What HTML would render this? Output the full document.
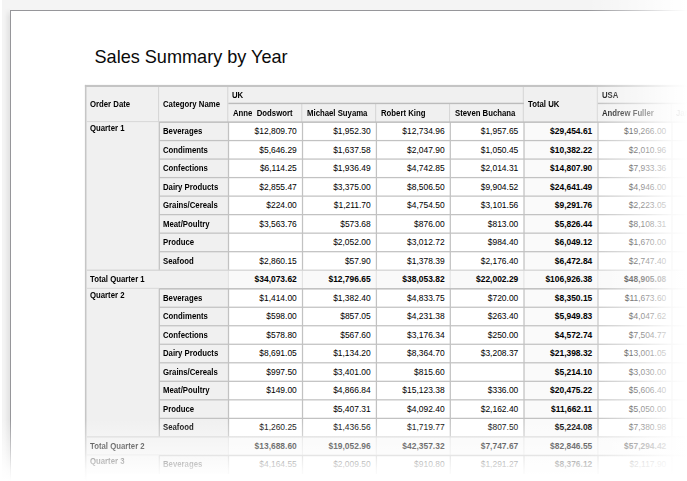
<!DOCTYPE html>
<html><head><meta charset="utf-8"><title>Sales Summary by Year</title>
<style>
html,body{margin:0;padding:0}
body{width:687px;height:481px;overflow:hidden;position:relative;background:#fff;font-family:"Liberation Sans",sans-serif}
#bg{position:absolute;left:2px;top:0;width:700px;height:500px;background:#f4f4f4}
#sh{position:absolute;left:4px;top:8px;width:6px;height:500px;background:linear-gradient(to right,rgba(0,0,0,0),rgba(0,0,0,0.07));-webkit-mask-image:linear-gradient(to bottom,transparent 0,#000 9px);mask-image:linear-gradient(to bottom,transparent 0,#000 9px)}
#page{position:absolute;left:10px;top:10px;width:800px;height:600px;background:#fff;border:1px solid #96969a;box-sizing:border-box}
#title{position:absolute;left:94.5px;top:44.5px;font-size:18.1px;line-height:24px;color:#0a0a0a;white-space:nowrap}
#grid{position:absolute;left:0;top:0}
.t{position:absolute;box-sizing:border-box;font-size:8.9px;color:#000;white-space:nowrap;overflow:hidden}
.t span{display:inline-block;position:relative}
.t.l{padding-left:3.8px;text-align:left}
.t.r{padding-right:5.6px;text-align:right;font-size:8.45px}
.h span{transform:scaleX(0.875);transform-origin:0 50%;top:0.0px}
.cat span{top:0.0px}
.q span{top:-3.0px}
.r span{top:0.0px}
.h,.b{font-weight:bold}
.n{font-weight:normal;color:#000}
#fr{position:absolute;right:0;top:0;width:100px;height:481px;background:linear-gradient(to right,rgba(255,255,255,0),rgba(255,255,255,0.5) 50%,rgba(255,255,255,0.86) 82%,rgba(255,255,255,1) 100%)}
#fb{position:absolute;left:0;bottom:0;width:687px;height:62px;background:linear-gradient(to bottom,rgba(255,255,255,0),rgba(255,255,255,0.5) 50%,rgba(255,255,255,0.88) 82%,rgba(255,255,255,1) 100%)}
</style></head><body>
<div id="bg"></div><div id="sh"></div>
<div id="page"></div>
<div id="title">Sales Summary by Year</div>
<svg id="grid" width="687" height="481" viewBox="0 0 687 481">
<rect x="85.60" y="85.00" width="674.40" height="37.04" fill="#f0f0f0"/>
<rect x="85.60" y="122.04" width="142.80" height="148.16" fill="#f0f0f0"/>
<rect x="228.40" y="122.04" width="531.60" height="148.16" fill="#fff"/>
<rect x="523.90" y="122.04" width="74.00" height="148.16" fill="#fafafa"/>
<rect x="85.60" y="270.20" width="142.80" height="18.52" fill="#f0f0f0"/>
<rect x="228.40" y="270.20" width="531.60" height="18.52" fill="#f9f9f9"/>
<rect x="85.60" y="288.72" width="142.80" height="148.16" fill="#f0f0f0"/>
<rect x="228.40" y="288.72" width="531.60" height="148.16" fill="#fff"/>
<rect x="523.90" y="288.72" width="74.00" height="148.16" fill="#fafafa"/>
<rect x="85.60" y="436.88" width="142.80" height="18.52" fill="#f0f0f0"/>
<rect x="228.40" y="436.88" width="531.60" height="18.52" fill="#f9f9f9"/>
<rect x="85.60" y="455.40" width="142.80" height="18.52" fill="#f0f0f0"/>
<rect x="228.40" y="455.40" width="531.60" height="18.52" fill="#fff"/>
<rect x="523.90" y="455.40" width="74.00" height="18.52" fill="#fafafa"/>
<rect x="158.12" y="85.00" width="0.95" height="37.04" fill="#d3d3d3"/>
<rect x="227.33" y="85.00" width="0.95" height="37.04" fill="#d3d3d3"/>
<rect x="522.82" y="85.00" width="0.95" height="37.04" fill="#d3d3d3"/>
<rect x="596.82" y="85.00" width="0.95" height="37.04" fill="#d3d3d3"/>
<rect x="301.32" y="103.52" width="0.95" height="18.52" fill="#d3d3d3"/>
<rect x="375.22" y="103.52" width="0.95" height="18.52" fill="#d3d3d3"/>
<rect x="449.12" y="103.52" width="0.95" height="18.52" fill="#d3d3d3"/>
<rect x="670.82" y="103.52" width="0.95" height="18.52" fill="#d3d3d3"/>
<rect x="744.72" y="103.52" width="0.95" height="18.52" fill="#d3d3d3"/>
<rect x="228.40" y="102.72" width="295.50" height="1.40" fill="#bcbcbc"/>
<rect x="597.90" y="102.72" width="162.10" height="1.40" fill="#bcbcbc"/>
<rect x="159.20" y="139.94" width="600.80" height="1.25" fill="#c2c2c2"/>
<rect x="159.20" y="158.45" width="600.80" height="1.25" fill="#c2c2c2"/>
<rect x="159.20" y="176.97" width="600.80" height="1.25" fill="#c2c2c2"/>
<rect x="159.20" y="195.50" width="600.80" height="1.25" fill="#c2c2c2"/>
<rect x="159.20" y="214.01" width="600.80" height="1.25" fill="#c2c2c2"/>
<rect x="159.20" y="232.53" width="600.80" height="1.25" fill="#c2c2c2"/>
<rect x="159.20" y="251.06" width="600.80" height="1.25" fill="#c2c2c2"/>
<rect x="158.67" y="122.04" width="1.25" height="148.16" fill="#c2c2c2"/>
<rect x="227.88" y="122.04" width="1.25" height="148.16" fill="#c2c2c2"/>
<rect x="301.88" y="122.04" width="1.25" height="148.16" fill="#c2c2c2"/>
<rect x="375.78" y="122.04" width="1.25" height="148.16" fill="#c2c2c2"/>
<rect x="449.68" y="122.04" width="1.25" height="148.16" fill="#c2c2c2"/>
<rect x="523.38" y="122.04" width="1.25" height="148.16" fill="#c2c2c2"/>
<rect x="597.38" y="122.04" width="1.25" height="148.16" fill="#c2c2c2"/>
<rect x="671.38" y="122.04" width="1.25" height="148.16" fill="#c2c2c2"/>
<rect x="745.27" y="122.04" width="1.25" height="148.16" fill="#c2c2c2"/>
<rect x="85.60" y="121.16" width="73.60" height="0.95" fill="#d6d6d6"/>
<rect x="159.20" y="121.39" width="600.80" height="1.50" fill="#bebebe"/>
<rect x="227.85" y="270.20" width="1.10" height="18.52" fill="#e2e2e2"/>
<rect x="301.85" y="270.20" width="1.10" height="18.52" fill="#e2e2e2"/>
<rect x="375.75" y="270.20" width="1.10" height="18.52" fill="#e2e2e2"/>
<rect x="449.65" y="270.20" width="1.10" height="18.52" fill="#e2e2e2"/>
<rect x="523.35" y="270.20" width="1.10" height="18.52" fill="#e2e2e2"/>
<rect x="597.35" y="270.20" width="1.10" height="18.52" fill="#e2e2e2"/>
<rect x="671.35" y="270.20" width="1.10" height="18.52" fill="#e2e2e2"/>
<rect x="745.25" y="270.20" width="1.10" height="18.52" fill="#e2e2e2"/>
<rect x="85.60" y="269.55" width="674.40" height="1.30" fill="#d4d4d4"/>
<rect x="159.20" y="306.62" width="600.80" height="1.25" fill="#c2c2c2"/>
<rect x="159.20" y="325.13" width="600.80" height="1.25" fill="#c2c2c2"/>
<rect x="159.20" y="343.65" width="600.80" height="1.25" fill="#c2c2c2"/>
<rect x="159.20" y="362.18" width="600.80" height="1.25" fill="#c2c2c2"/>
<rect x="159.20" y="380.69" width="600.80" height="1.25" fill="#c2c2c2"/>
<rect x="159.20" y="399.21" width="600.80" height="1.25" fill="#c2c2c2"/>
<rect x="159.20" y="417.74" width="600.80" height="1.25" fill="#c2c2c2"/>
<rect x="158.67" y="288.72" width="1.25" height="148.16" fill="#c2c2c2"/>
<rect x="227.88" y="288.72" width="1.25" height="148.16" fill="#c2c2c2"/>
<rect x="301.88" y="288.72" width="1.25" height="148.16" fill="#c2c2c2"/>
<rect x="375.78" y="288.72" width="1.25" height="148.16" fill="#c2c2c2"/>
<rect x="449.68" y="288.72" width="1.25" height="148.16" fill="#c2c2c2"/>
<rect x="523.38" y="288.72" width="1.25" height="148.16" fill="#c2c2c2"/>
<rect x="597.38" y="288.72" width="1.25" height="148.16" fill="#c2c2c2"/>
<rect x="671.38" y="288.72" width="1.25" height="148.16" fill="#c2c2c2"/>
<rect x="745.27" y="288.72" width="1.25" height="148.16" fill="#c2c2c2"/>
<rect x="85.60" y="287.85" width="73.60" height="0.95" fill="#d6d6d6"/>
<rect x="159.20" y="288.07" width="600.80" height="1.50" fill="#bebebe"/>
<rect x="227.85" y="436.88" width="1.10" height="18.52" fill="#e2e2e2"/>
<rect x="301.85" y="436.88" width="1.10" height="18.52" fill="#e2e2e2"/>
<rect x="375.75" y="436.88" width="1.10" height="18.52" fill="#e2e2e2"/>
<rect x="449.65" y="436.88" width="1.10" height="18.52" fill="#e2e2e2"/>
<rect x="523.35" y="436.88" width="1.10" height="18.52" fill="#e2e2e2"/>
<rect x="597.35" y="436.88" width="1.10" height="18.52" fill="#e2e2e2"/>
<rect x="671.35" y="436.88" width="1.10" height="18.52" fill="#e2e2e2"/>
<rect x="745.25" y="436.88" width="1.10" height="18.52" fill="#e2e2e2"/>
<rect x="85.60" y="436.23" width="674.40" height="1.30" fill="#d4d4d4"/>
<rect x="158.67" y="455.40" width="1.25" height="18.52" fill="#c2c2c2"/>
<rect x="227.88" y="455.40" width="1.25" height="18.52" fill="#c2c2c2"/>
<rect x="301.88" y="455.40" width="1.25" height="18.52" fill="#c2c2c2"/>
<rect x="375.78" y="455.40" width="1.25" height="18.52" fill="#c2c2c2"/>
<rect x="449.68" y="455.40" width="1.25" height="18.52" fill="#c2c2c2"/>
<rect x="523.38" y="455.40" width="1.25" height="18.52" fill="#c2c2c2"/>
<rect x="597.38" y="455.40" width="1.25" height="18.52" fill="#c2c2c2"/>
<rect x="671.38" y="455.40" width="1.25" height="18.52" fill="#c2c2c2"/>
<rect x="745.27" y="455.40" width="1.25" height="18.52" fill="#c2c2c2"/>
<rect x="85.60" y="454.52" width="73.60" height="0.95" fill="#d6d6d6"/>
<rect x="159.20" y="454.75" width="600.80" height="1.50" fill="#bebebe"/>
<rect x="84.90" y="84.90" width="675.10" height="2.10" fill="#c4c4c4"/>
<rect x="84.90" y="84.90" width="1.05" height="435.10" fill="#c4c4c4"/>
<rect x="85.95" y="87.00" width="1.00" height="433.00" fill="#dbdbdb"/>
</svg>
<div class="t h l" style="left:86.70px;top:85.90px;width:73.60px;height:37.04px;line-height:37.04px"><span>Order Date</span></div>
<div class="t h l" style="left:159.40px;top:85.90px;width:69.20px;height:37.04px;line-height:37.04px"><span>Category Name</span></div>
<div class="t h l" style="left:228.40px;top:85.90px;width:295.50px;height:18.52px;line-height:18.52px"><span>UK</span></div>
<div class="t h l" style="left:229.00px;top:104.02px;width:74.00px;height:18.52px;line-height:18.52px"><span>Anne&nbsp; Dodswort</span></div>
<div class="t h l" style="left:303.00px;top:104.02px;width:73.90px;height:18.52px;line-height:18.52px"><span>Michael Suyama</span></div>
<div class="t h l" style="left:376.90px;top:104.02px;width:73.90px;height:18.52px;line-height:18.52px"><span>Robert King</span></div>
<div class="t h l" style="left:450.80px;top:104.02px;width:73.70px;height:18.52px;line-height:18.52px"><span>Steven Buchana</span></div>
<div class="t h l" style="left:523.90px;top:85.90px;width:74.00px;height:37.04px;line-height:37.04px"><span>Total UK</span></div>
<div class="t h l" style="left:597.90px;top:85.90px;width:147.90px;height:18.52px;line-height:18.52px"><span>USA</span></div>
<div class="t h l" style="left:598.50px;top:104.02px;width:74.00px;height:18.52px;line-height:18.52px"><span>Andrew Fuller</span></div>
<div class="t h l" style="left:672.50px;top:104.02px;width:73.90px;height:18.52px;line-height:18.52px"><span>Janet Leverling</span></div>
<div class="t h l q" style="left:86.50px;top:122.04px;width:73.60px;height:18.52px;line-height:18.52px"><span>Quarter 1</span></div>
<div class="t h l cat" style="left:159.20px;top:122.04px;width:69.20px;height:18.52px;line-height:18.52px"><span>Beverages</span></div>
<div class="t r n" style="left:228.40px;top:122.04px;width:74.00px;height:18.52px;line-height:18.52px"><span>$12,809.70</span></div>
<div class="t r n" style="left:302.40px;top:122.04px;width:73.90px;height:18.52px;line-height:18.52px"><span>$1,952.30</span></div>
<div class="t r n" style="left:376.30px;top:122.04px;width:73.90px;height:18.52px;line-height:18.52px"><span>$12,734.96</span></div>
<div class="t r n" style="left:450.20px;top:122.04px;width:73.70px;height:18.52px;line-height:18.52px"><span>$1,957.65</span></div>
<div class="t r b" style="left:523.90px;top:122.04px;width:74.00px;height:18.52px;line-height:18.52px"><span>$29,454.61</span></div>
<div class="t r n" style="left:597.90px;top:122.04px;width:74.00px;height:18.52px;line-height:18.52px"><span>$19,266.00</span></div>
<div class="t h l cat" style="left:159.20px;top:140.56px;width:69.20px;height:18.52px;line-height:18.52px"><span>Condiments</span></div>
<div class="t r n" style="left:228.40px;top:140.56px;width:74.00px;height:18.52px;line-height:18.52px"><span>$5,646.29</span></div>
<div class="t r n" style="left:302.40px;top:140.56px;width:73.90px;height:18.52px;line-height:18.52px"><span>$1,637.58</span></div>
<div class="t r n" style="left:376.30px;top:140.56px;width:73.90px;height:18.52px;line-height:18.52px"><span>$2,047.90</span></div>
<div class="t r n" style="left:450.20px;top:140.56px;width:73.70px;height:18.52px;line-height:18.52px"><span>$1,050.45</span></div>
<div class="t r b" style="left:523.90px;top:140.56px;width:74.00px;height:18.52px;line-height:18.52px"><span>$10,382.22</span></div>
<div class="t r n" style="left:597.90px;top:140.56px;width:74.00px;height:18.52px;line-height:18.52px"><span>$2,010.96</span></div>
<div class="t h l cat" style="left:159.20px;top:159.08px;width:69.20px;height:18.52px;line-height:18.52px"><span>Confections</span></div>
<div class="t r n" style="left:228.40px;top:159.08px;width:74.00px;height:18.52px;line-height:18.52px"><span>$6,114.25</span></div>
<div class="t r n" style="left:302.40px;top:159.08px;width:73.90px;height:18.52px;line-height:18.52px"><span>$1,936.49</span></div>
<div class="t r n" style="left:376.30px;top:159.08px;width:73.90px;height:18.52px;line-height:18.52px"><span>$4,742.85</span></div>
<div class="t r n" style="left:450.20px;top:159.08px;width:73.70px;height:18.52px;line-height:18.52px"><span>$2,014.31</span></div>
<div class="t r b" style="left:523.90px;top:159.08px;width:74.00px;height:18.52px;line-height:18.52px"><span>$14,807.90</span></div>
<div class="t r n" style="left:597.90px;top:159.08px;width:74.00px;height:18.52px;line-height:18.52px"><span>$7,933.36</span></div>
<div class="t h l cat" style="left:159.20px;top:177.60px;width:69.20px;height:18.52px;line-height:18.52px"><span>Dairy Products</span></div>
<div class="t r n" style="left:228.40px;top:177.60px;width:74.00px;height:18.52px;line-height:18.52px"><span>$2,855.47</span></div>
<div class="t r n" style="left:302.40px;top:177.60px;width:73.90px;height:18.52px;line-height:18.52px"><span>$3,375.00</span></div>
<div class="t r n" style="left:376.30px;top:177.60px;width:73.90px;height:18.52px;line-height:18.52px"><span>$8,506.50</span></div>
<div class="t r n" style="left:450.20px;top:177.60px;width:73.70px;height:18.52px;line-height:18.52px"><span>$9,904.52</span></div>
<div class="t r b" style="left:523.90px;top:177.60px;width:74.00px;height:18.52px;line-height:18.52px"><span>$24,641.49</span></div>
<div class="t r n" style="left:597.90px;top:177.60px;width:74.00px;height:18.52px;line-height:18.52px"><span>$4,946.00</span></div>
<div class="t h l cat" style="left:159.20px;top:196.12px;width:69.20px;height:18.52px;line-height:18.52px"><span>Grains/Cereals</span></div>
<div class="t r n" style="left:228.40px;top:196.12px;width:74.00px;height:18.52px;line-height:18.52px"><span>$224.00</span></div>
<div class="t r n" style="left:302.40px;top:196.12px;width:73.90px;height:18.52px;line-height:18.52px"><span>$1,211.70</span></div>
<div class="t r n" style="left:376.30px;top:196.12px;width:73.90px;height:18.52px;line-height:18.52px"><span>$4,754.50</span></div>
<div class="t r n" style="left:450.20px;top:196.12px;width:73.70px;height:18.52px;line-height:18.52px"><span>$3,101.56</span></div>
<div class="t r b" style="left:523.90px;top:196.12px;width:74.00px;height:18.52px;line-height:18.52px"><span>$9,291.76</span></div>
<div class="t r n" style="left:597.90px;top:196.12px;width:74.00px;height:18.52px;line-height:18.52px"><span>$2,223.05</span></div>
<div class="t h l cat" style="left:159.20px;top:214.64px;width:69.20px;height:18.52px;line-height:18.52px"><span>Meat/Poultry</span></div>
<div class="t r n" style="left:228.40px;top:214.64px;width:74.00px;height:18.52px;line-height:18.52px"><span>$3,563.76</span></div>
<div class="t r n" style="left:302.40px;top:214.64px;width:73.90px;height:18.52px;line-height:18.52px"><span>$573.68</span></div>
<div class="t r n" style="left:376.30px;top:214.64px;width:73.90px;height:18.52px;line-height:18.52px"><span>$876.00</span></div>
<div class="t r n" style="left:450.20px;top:214.64px;width:73.70px;height:18.52px;line-height:18.52px"><span>$813.00</span></div>
<div class="t r b" style="left:523.90px;top:214.64px;width:74.00px;height:18.52px;line-height:18.52px"><span>$5,826.44</span></div>
<div class="t r n" style="left:597.90px;top:214.64px;width:74.00px;height:18.52px;line-height:18.52px"><span>$8,108.31</span></div>
<div class="t h l cat" style="left:159.20px;top:233.16px;width:69.20px;height:18.52px;line-height:18.52px"><span>Produce</span></div>
<div class="t r n" style="left:302.40px;top:233.16px;width:73.90px;height:18.52px;line-height:18.52px"><span>$2,052.00</span></div>
<div class="t r n" style="left:376.30px;top:233.16px;width:73.90px;height:18.52px;line-height:18.52px"><span>$3,012.72</span></div>
<div class="t r n" style="left:450.20px;top:233.16px;width:73.70px;height:18.52px;line-height:18.52px"><span>$984.40</span></div>
<div class="t r b" style="left:523.90px;top:233.16px;width:74.00px;height:18.52px;line-height:18.52px"><span>$6,049.12</span></div>
<div class="t r n" style="left:597.90px;top:233.16px;width:74.00px;height:18.52px;line-height:18.52px"><span>$1,670.00</span></div>
<div class="t h l cat" style="left:159.20px;top:251.68px;width:69.20px;height:18.52px;line-height:18.52px"><span>Seafood</span></div>
<div class="t r n" style="left:228.40px;top:251.68px;width:74.00px;height:18.52px;line-height:18.52px"><span>$2,860.15</span></div>
<div class="t r n" style="left:302.40px;top:251.68px;width:73.90px;height:18.52px;line-height:18.52px"><span>$57.90</span></div>
<div class="t r n" style="left:376.30px;top:251.68px;width:73.90px;height:18.52px;line-height:18.52px"><span>$1,378.39</span></div>
<div class="t r n" style="left:450.20px;top:251.68px;width:73.70px;height:18.52px;line-height:18.52px"><span>$2,176.40</span></div>
<div class="t r b" style="left:523.90px;top:251.68px;width:74.00px;height:18.52px;line-height:18.52px"><span>$6,472.84</span></div>
<div class="t r n" style="left:597.90px;top:251.68px;width:74.00px;height:18.52px;line-height:18.52px"><span>$2,747.40</span></div>
<div class="t h l" style="left:86.40px;top:270.20px;width:142.80px;height:18.52px;line-height:18.52px"><span>Total Quarter 1</span></div>
<div class="t r b" style="left:228.40px;top:270.20px;width:74.00px;height:18.52px;line-height:18.52px"><span>$34,073.62</span></div>
<div class="t r b" style="left:302.40px;top:270.20px;width:73.90px;height:18.52px;line-height:18.52px"><span>$12,796.65</span></div>
<div class="t r b" style="left:376.30px;top:270.20px;width:73.90px;height:18.52px;line-height:18.52px"><span>$38,053.82</span></div>
<div class="t r b" style="left:450.20px;top:270.20px;width:73.70px;height:18.52px;line-height:18.52px"><span>$22,002.29</span></div>
<div class="t r b" style="left:523.90px;top:270.20px;width:74.00px;height:18.52px;line-height:18.52px"><span>$106,926.38</span></div>
<div class="t r b" style="left:597.90px;top:270.20px;width:74.00px;height:18.52px;line-height:18.52px"><span>$48,905.08</span></div>
<div class="t h l q" style="left:86.50px;top:288.72px;width:73.60px;height:18.52px;line-height:18.52px"><span>Quarter 2</span></div>
<div class="t h l cat" style="left:159.20px;top:288.72px;width:69.20px;height:18.52px;line-height:18.52px"><span>Beverages</span></div>
<div class="t r n" style="left:228.40px;top:288.72px;width:74.00px;height:18.52px;line-height:18.52px"><span>$1,414.00</span></div>
<div class="t r n" style="left:302.40px;top:288.72px;width:73.90px;height:18.52px;line-height:18.52px"><span>$1,382.40</span></div>
<div class="t r n" style="left:376.30px;top:288.72px;width:73.90px;height:18.52px;line-height:18.52px"><span>$4,833.75</span></div>
<div class="t r n" style="left:450.20px;top:288.72px;width:73.70px;height:18.52px;line-height:18.52px"><span>$720.00</span></div>
<div class="t r b" style="left:523.90px;top:288.72px;width:74.00px;height:18.52px;line-height:18.52px"><span>$8,350.15</span></div>
<div class="t r n" style="left:597.90px;top:288.72px;width:74.00px;height:18.52px;line-height:18.52px"><span>$11,673.60</span></div>
<div class="t h l cat" style="left:159.20px;top:307.24px;width:69.20px;height:18.52px;line-height:18.52px"><span>Condiments</span></div>
<div class="t r n" style="left:228.40px;top:307.24px;width:74.00px;height:18.52px;line-height:18.52px"><span>$598.00</span></div>
<div class="t r n" style="left:302.40px;top:307.24px;width:73.90px;height:18.52px;line-height:18.52px"><span>$857.05</span></div>
<div class="t r n" style="left:376.30px;top:307.24px;width:73.90px;height:18.52px;line-height:18.52px"><span>$4,231.38</span></div>
<div class="t r n" style="left:450.20px;top:307.24px;width:73.70px;height:18.52px;line-height:18.52px"><span>$263.40</span></div>
<div class="t r b" style="left:523.90px;top:307.24px;width:74.00px;height:18.52px;line-height:18.52px"><span>$5,949.83</span></div>
<div class="t r n" style="left:597.90px;top:307.24px;width:74.00px;height:18.52px;line-height:18.52px"><span>$4,047.62</span></div>
<div class="t h l cat" style="left:159.20px;top:325.76px;width:69.20px;height:18.52px;line-height:18.52px"><span>Confections</span></div>
<div class="t r n" style="left:228.40px;top:325.76px;width:74.00px;height:18.52px;line-height:18.52px"><span>$578.80</span></div>
<div class="t r n" style="left:302.40px;top:325.76px;width:73.90px;height:18.52px;line-height:18.52px"><span>$567.60</span></div>
<div class="t r n" style="left:376.30px;top:325.76px;width:73.90px;height:18.52px;line-height:18.52px"><span>$3,176.34</span></div>
<div class="t r n" style="left:450.20px;top:325.76px;width:73.70px;height:18.52px;line-height:18.52px"><span>$250.00</span></div>
<div class="t r b" style="left:523.90px;top:325.76px;width:74.00px;height:18.52px;line-height:18.52px"><span>$4,572.74</span></div>
<div class="t r n" style="left:597.90px;top:325.76px;width:74.00px;height:18.52px;line-height:18.52px"><span>$7,504.77</span></div>
<div class="t h l cat" style="left:159.20px;top:344.28px;width:69.20px;height:18.52px;line-height:18.52px"><span>Dairy Products</span></div>
<div class="t r n" style="left:228.40px;top:344.28px;width:74.00px;height:18.52px;line-height:18.52px"><span>$8,691.05</span></div>
<div class="t r n" style="left:302.40px;top:344.28px;width:73.90px;height:18.52px;line-height:18.52px"><span>$1,134.20</span></div>
<div class="t r n" style="left:376.30px;top:344.28px;width:73.90px;height:18.52px;line-height:18.52px"><span>$8,364.70</span></div>
<div class="t r n" style="left:450.20px;top:344.28px;width:73.70px;height:18.52px;line-height:18.52px"><span>$3,208.37</span></div>
<div class="t r b" style="left:523.90px;top:344.28px;width:74.00px;height:18.52px;line-height:18.52px"><span>$21,398.32</span></div>
<div class="t r n" style="left:597.90px;top:344.28px;width:74.00px;height:18.52px;line-height:18.52px"><span>$13,001.05</span></div>
<div class="t h l cat" style="left:159.20px;top:362.80px;width:69.20px;height:18.52px;line-height:18.52px"><span>Grains/Cereals</span></div>
<div class="t r n" style="left:228.40px;top:362.80px;width:74.00px;height:18.52px;line-height:18.52px"><span>$997.50</span></div>
<div class="t r n" style="left:302.40px;top:362.80px;width:73.90px;height:18.52px;line-height:18.52px"><span>$3,401.00</span></div>
<div class="t r n" style="left:376.30px;top:362.80px;width:73.90px;height:18.52px;line-height:18.52px"><span>$815.60</span></div>
<div class="t r b" style="left:523.90px;top:362.80px;width:74.00px;height:18.52px;line-height:18.52px"><span>$5,214.10</span></div>
<div class="t r n" style="left:597.90px;top:362.80px;width:74.00px;height:18.52px;line-height:18.52px"><span>$3,030.00</span></div>
<div class="t h l cat" style="left:159.20px;top:381.32px;width:69.20px;height:18.52px;line-height:18.52px"><span>Meat/Poultry</span></div>
<div class="t r n" style="left:228.40px;top:381.32px;width:74.00px;height:18.52px;line-height:18.52px"><span>$149.00</span></div>
<div class="t r n" style="left:302.40px;top:381.32px;width:73.90px;height:18.52px;line-height:18.52px"><span>$4,866.84</span></div>
<div class="t r n" style="left:376.30px;top:381.32px;width:73.90px;height:18.52px;line-height:18.52px"><span>$15,123.38</span></div>
<div class="t r n" style="left:450.20px;top:381.32px;width:73.70px;height:18.52px;line-height:18.52px"><span>$336.00</span></div>
<div class="t r b" style="left:523.90px;top:381.32px;width:74.00px;height:18.52px;line-height:18.52px"><span>$20,475.22</span></div>
<div class="t r n" style="left:597.90px;top:381.32px;width:74.00px;height:18.52px;line-height:18.52px"><span>$5,606.40</span></div>
<div class="t h l cat" style="left:159.20px;top:399.84px;width:69.20px;height:18.52px;line-height:18.52px"><span>Produce</span></div>
<div class="t r n" style="left:302.40px;top:399.84px;width:73.90px;height:18.52px;line-height:18.52px"><span>$5,407.31</span></div>
<div class="t r n" style="left:376.30px;top:399.84px;width:73.90px;height:18.52px;line-height:18.52px"><span>$4,092.40</span></div>
<div class="t r n" style="left:450.20px;top:399.84px;width:73.70px;height:18.52px;line-height:18.52px"><span>$2,162.40</span></div>
<div class="t r b" style="left:523.90px;top:399.84px;width:74.00px;height:18.52px;line-height:18.52px"><span>$11,662.11</span></div>
<div class="t r n" style="left:597.90px;top:399.84px;width:74.00px;height:18.52px;line-height:18.52px"><span>$5,050.00</span></div>
<div class="t h l cat" style="left:159.20px;top:418.36px;width:69.20px;height:18.52px;line-height:18.52px"><span>Seafood</span></div>
<div class="t r n" style="left:228.40px;top:418.36px;width:74.00px;height:18.52px;line-height:18.52px"><span>$1,260.25</span></div>
<div class="t r n" style="left:302.40px;top:418.36px;width:73.90px;height:18.52px;line-height:18.52px"><span>$1,436.56</span></div>
<div class="t r n" style="left:376.30px;top:418.36px;width:73.90px;height:18.52px;line-height:18.52px"><span>$1,719.77</span></div>
<div class="t r n" style="left:450.20px;top:418.36px;width:73.70px;height:18.52px;line-height:18.52px"><span>$807.50</span></div>
<div class="t r b" style="left:523.90px;top:418.36px;width:74.00px;height:18.52px;line-height:18.52px"><span>$5,224.08</span></div>
<div class="t r n" style="left:597.90px;top:418.36px;width:74.00px;height:18.52px;line-height:18.52px"><span>$7,380.98</span></div>
<div class="t h l" style="left:86.40px;top:436.88px;width:142.80px;height:18.52px;line-height:18.52px"><span>Total Quarter 2</span></div>
<div class="t r b" style="left:228.40px;top:436.88px;width:74.00px;height:18.52px;line-height:18.52px"><span>$13,688.60</span></div>
<div class="t r b" style="left:302.40px;top:436.88px;width:73.90px;height:18.52px;line-height:18.52px"><span>$19,052.96</span></div>
<div class="t r b" style="left:376.30px;top:436.88px;width:73.90px;height:18.52px;line-height:18.52px"><span>$42,357.32</span></div>
<div class="t r b" style="left:450.20px;top:436.88px;width:73.70px;height:18.52px;line-height:18.52px"><span>$7,747.67</span></div>
<div class="t r b" style="left:523.90px;top:436.88px;width:74.00px;height:18.52px;line-height:18.52px"><span>$82,846.55</span></div>
<div class="t r b" style="left:597.90px;top:436.88px;width:74.00px;height:18.52px;line-height:18.52px"><span>$57,294.42</span></div>
<div class="t h l q" style="left:86.50px;top:455.40px;width:73.60px;height:18.52px;line-height:18.52px"><span>Quarter 3</span></div>
<div class="t h l cat" style="left:159.20px;top:455.40px;width:69.20px;height:18.52px;line-height:18.52px"><span>Beverages</span></div>
<div class="t r n" style="left:228.40px;top:455.40px;width:74.00px;height:18.52px;line-height:18.52px"><span>$4,164.55</span></div>
<div class="t r n" style="left:302.40px;top:455.40px;width:73.90px;height:18.52px;line-height:18.52px"><span>$2,009.50</span></div>
<div class="t r n" style="left:376.30px;top:455.40px;width:73.90px;height:18.52px;line-height:18.52px"><span>$910.80</span></div>
<div class="t r n" style="left:450.20px;top:455.40px;width:73.70px;height:18.52px;line-height:18.52px"><span>$1,291.27</span></div>
<div class="t r b" style="left:523.90px;top:455.40px;width:74.00px;height:18.52px;line-height:18.52px"><span>$8,376.12</span></div>
<div class="t r n" style="left:597.90px;top:455.40px;width:74.00px;height:18.52px;line-height:18.52px"><span>$2,117.90</span></div>
<div id="fr"></div><div id="fb"></div>
</body></html>
